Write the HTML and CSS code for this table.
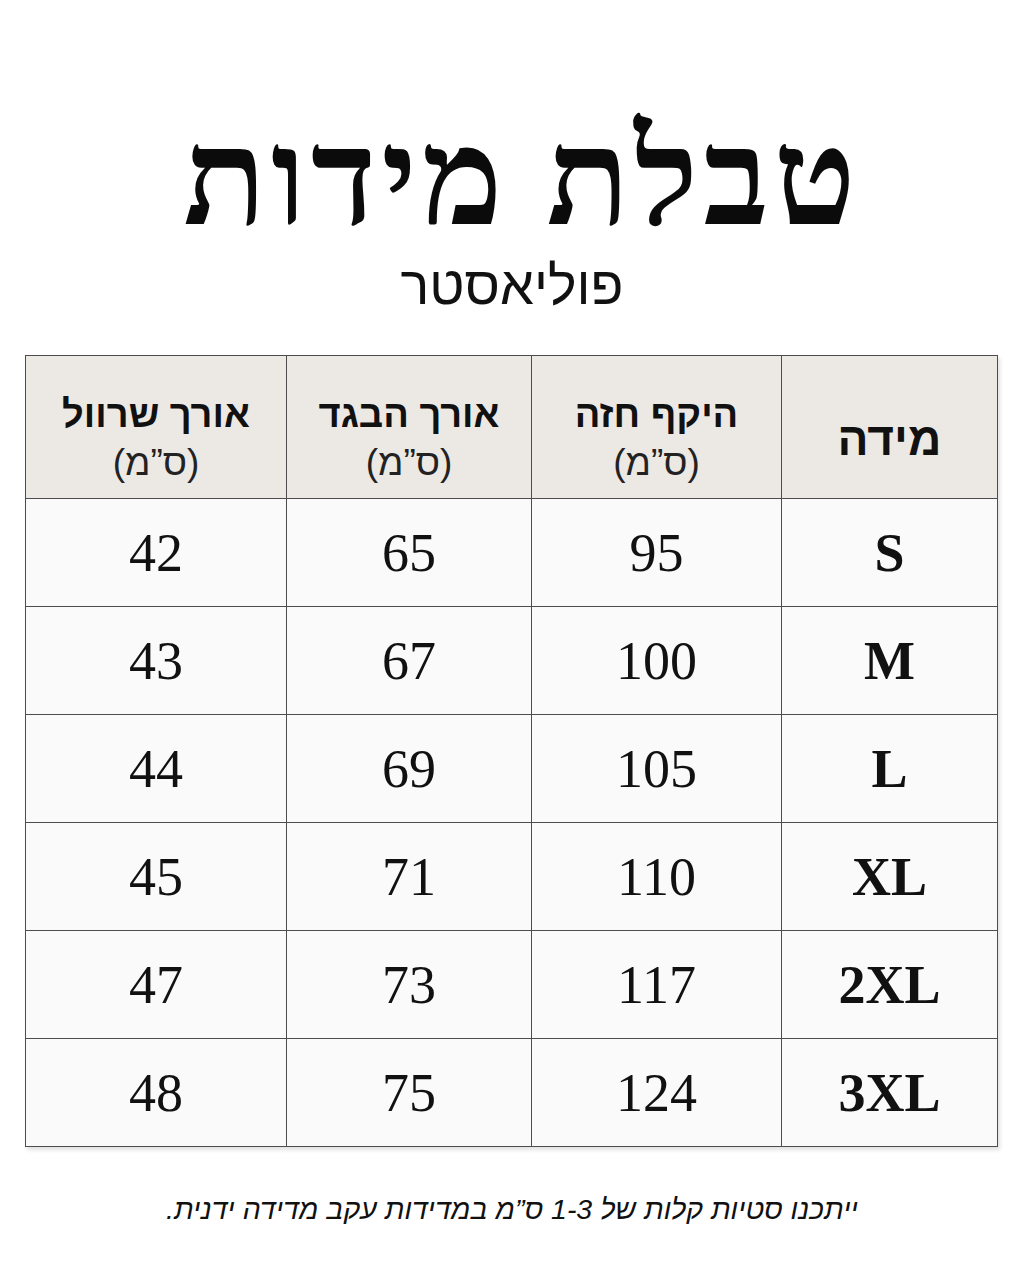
FILE: index.html
```html
<!DOCTYPE html>
<html lang="he" dir="rtl">
<head>
<meta charset="utf-8">
<title>טבלת מידות</title>
<link rel="stylesheet" href="styles.css">
</head>
<body>
<main class="page">
  <header class="heading">
    <h1 class="title">טבלת מידות</h1>
    <p class="subtitle">פוליאסטר</p>
  </header>
  <table class="sizes">
    <colgroup>
      <col class="c-size"><col class="c-chest"><col class="c-length"><col class="c-sleeve">
    </colgroup>
    <thead>
      <tr>
        <th class="h-size">מידה</th>
        <th><span class="h-main">היקף חזה</span><span class="h-unit">(ס”מ)</span></th>
        <th><span class="h-main">אורך הבגד</span><span class="h-unit">(ס”מ)</span></th>
        <th><span class="h-main">אורך שרוול</span><span class="h-unit">(ס”מ)</span></th>
      </tr>
    </thead>
    <tbody>
      <tr><td class="size">S</td><td>95</td><td>65</td><td>42</td></tr>
      <tr><td class="size">M</td><td>100</td><td>67</td><td>43</td></tr>
      <tr><td class="size">L</td><td>105</td><td>69</td><td>44</td></tr>
      <tr><td class="size">XL</td><td>110</td><td>71</td><td>45</td></tr>
      <tr><td class="size">2XL</td><td>117</td><td>73</td><td>47</td></tr>
      <tr><td class="size">3XL</td><td>124</td><td>75</td><td>48</td></tr>
    </tbody>
  </table>
  <p class="note">ייתכנו סטיות קלות של 1-3 ס”מ במדידות עקב מדידה ידנית.</p>
</main>
</body>
</html>
```

FILE: styles.css
```css
html, body {
  margin: 0;
  padding: 0;
  background: #ffffff;
}

.page {
  width: 1024px;
  min-height: 1280px;
  box-sizing: border-box;
  padding: 105px 26px 0 26px;
  color: #111;
}

.heading {
  text-align: center;
}

.title {
  margin: 0;
  padding-left: 20px;
  font-family: "Liberation Serif", "DejaVu Serif", serif;
  font-weight: 700;
  font-size: 136px;
  letter-spacing: 5px;
  line-height: 146px;
  color: #0b0b0b;
}

.subtitle {
  margin: 0;
  font-family: "Liberation Sans", Arial, sans-serif;
  font-size: 54px;
  line-height: 68px;
  color: #111;
}

.sizes {
  margin-top: 36px;
  width: 972px;
  border-collapse: collapse;
  table-layout: fixed;
  box-shadow: 2px 3px 4px rgba(0, 0, 0, 0.12);
}

.c-size { width: 216px; }
.c-chest { width: 250px; }
.c-length { width: 245px; }
.c-sleeve { width: 261px; }

.sizes th,
.sizes td {
  border: 1.5px solid #4d4d4d;
  text-align: center;
  vertical-align: middle;
  padding: 0;
}

.sizes th {
  height: 143px;
  box-sizing: border-box;
  padding-top: 20px;
  background: #ece8e4;
  font-family: "Liberation Sans", Arial, sans-serif;
  font-weight: 700;
}

.h-main {
  display: block;
  font-size: 38px;
  line-height: 48px;
}

.h-unit {
  display: block;
  margin-top: 3px;
  font-weight: 400;
  font-size: 37px;
  line-height: 44px;
  color: #222;
}

.sizes th.h-size {
  font-size: 46px;
  padding-top: 24px;
}

.sizes td {
  height: 107px;
  background: #fafafa;
  font-family: "Liberation Serif", "Times New Roman", serif;
  font-size: 54px;
  color: #111;
}

.sizes td.size {
  font-weight: 700;
}

.note {
  margin: 46px 0 0 0;
  text-align: center;
  font-family: "Liberation Sans", Arial, sans-serif;
  font-style: italic;
  font-size: 28.5px;
  color: #111;
}
```
